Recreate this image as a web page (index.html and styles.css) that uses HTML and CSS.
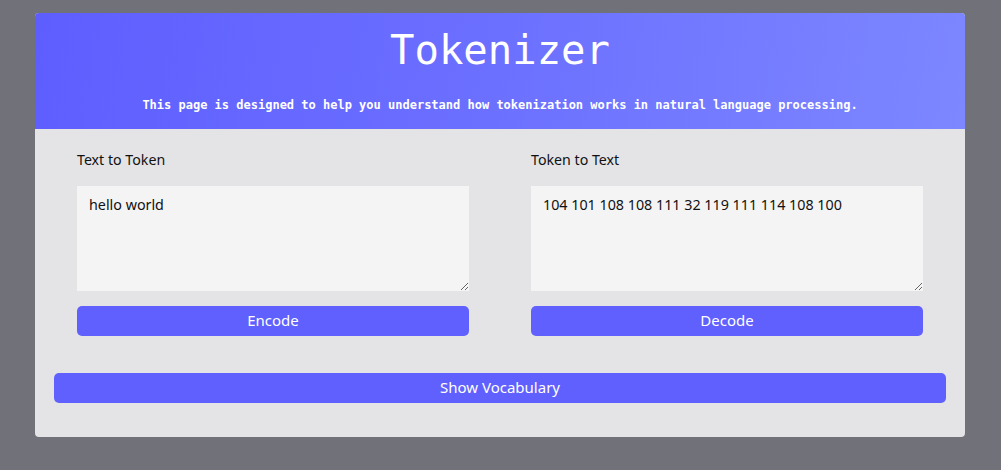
FILE: index.html
```html
<!DOCTYPE html>
<html>
<head>
<meta charset="utf-8">
<link rel="stylesheet" href="styles.css">
</head>
<body>
<div class="card">
  <header class="hero">
    <h1 class="title">Tokenizer</h1>
    <p class="subtitle">This page is designed to help you understand how tokenization works in natural language processing.</p>
  </header>
  <div class="panels">
    <div class="panel">
      <label class="label">Text to Token</label>
      <textarea class="area">hello world</textarea>
      <button class="btn">Encode</button>
    </div>
    <div class="panel">
      <label class="label">Token to Text</label>
      <textarea class="area">104 101 108 108 111 32 119 111 114 108 100</textarea>
      <button class="btn">Decode</button>
    </div>
  </div>
  <div class="footer">
    <button class="btn">Show Vocabulary</button>
  </div>
</div>
</body>
</html>
```
FILE: styles.css
```css
html, body {
  margin: 0;
  padding: 0;
}
body {
  background: #71717a;
  font-family: "Noto Sans", "Open Sans", sans-serif;
  padding: 13px 36px 33px 35px;
}
.card {
  background: #e4e4e7;
  border-radius: 4px;
  overflow: hidden;
  width: 930px;
}
.hero {
  background: linear-gradient(100deg, #5e5eff 0%, #6c70ff 50%, #7d87ff 100%);
  color: #fff;
  height: 116px;
  text-align: center;
  font-family: "DejaVu Sans Mono", "Liberation Mono", monospace;
  padding-top: 1px;
  box-sizing: border-box;
}
.title {
  margin: 14px 0 0;
  font-size: 40.6px;
  font-weight: normal;
  line-height: 44px;
}
.subtitle {
  margin: 25px 0 0;
  font-size: 12px;
  font-weight: bold;
  line-height: 16px;
}
.panels {
  display: grid;
  grid-template-columns: 392px 392px;
  column-gap: 62px;
  padding: 21px 42px 0;
}
.panel {
  display: flex;
  flex-direction: column;
}
.label {
  font-size: 14.2px;
  color: #111;
  line-height: 20px;
  height: 20px;
}
.area {
  margin-top: 16px;
  height: 105px;
  box-sizing: border-box;
  border: none;
  background: #f4f4f5;
  padding: 9px 12px;
  font-family: "Noto Sans", "Open Sans", sans-serif;
  font-size: 14.3px;
  color: #111;
  resize: vertical;
  outline: none;
}
.btn {
  margin-top: 15px;
  height: 30px;
  border: none;
  border-radius: 5px;
  background: #6060ff;
  color: #fff;
  font-family: "Noto Sans", "Open Sans", sans-serif;
  font-size: 15px;
  line-height: 28px;
  padding: 0 0 2px;
  width: 100%;
}
.footer {
  padding: 22px 19px 34px;
  display: flex;
}
.footer .btn {
  margin-top: 15px;
}
```
